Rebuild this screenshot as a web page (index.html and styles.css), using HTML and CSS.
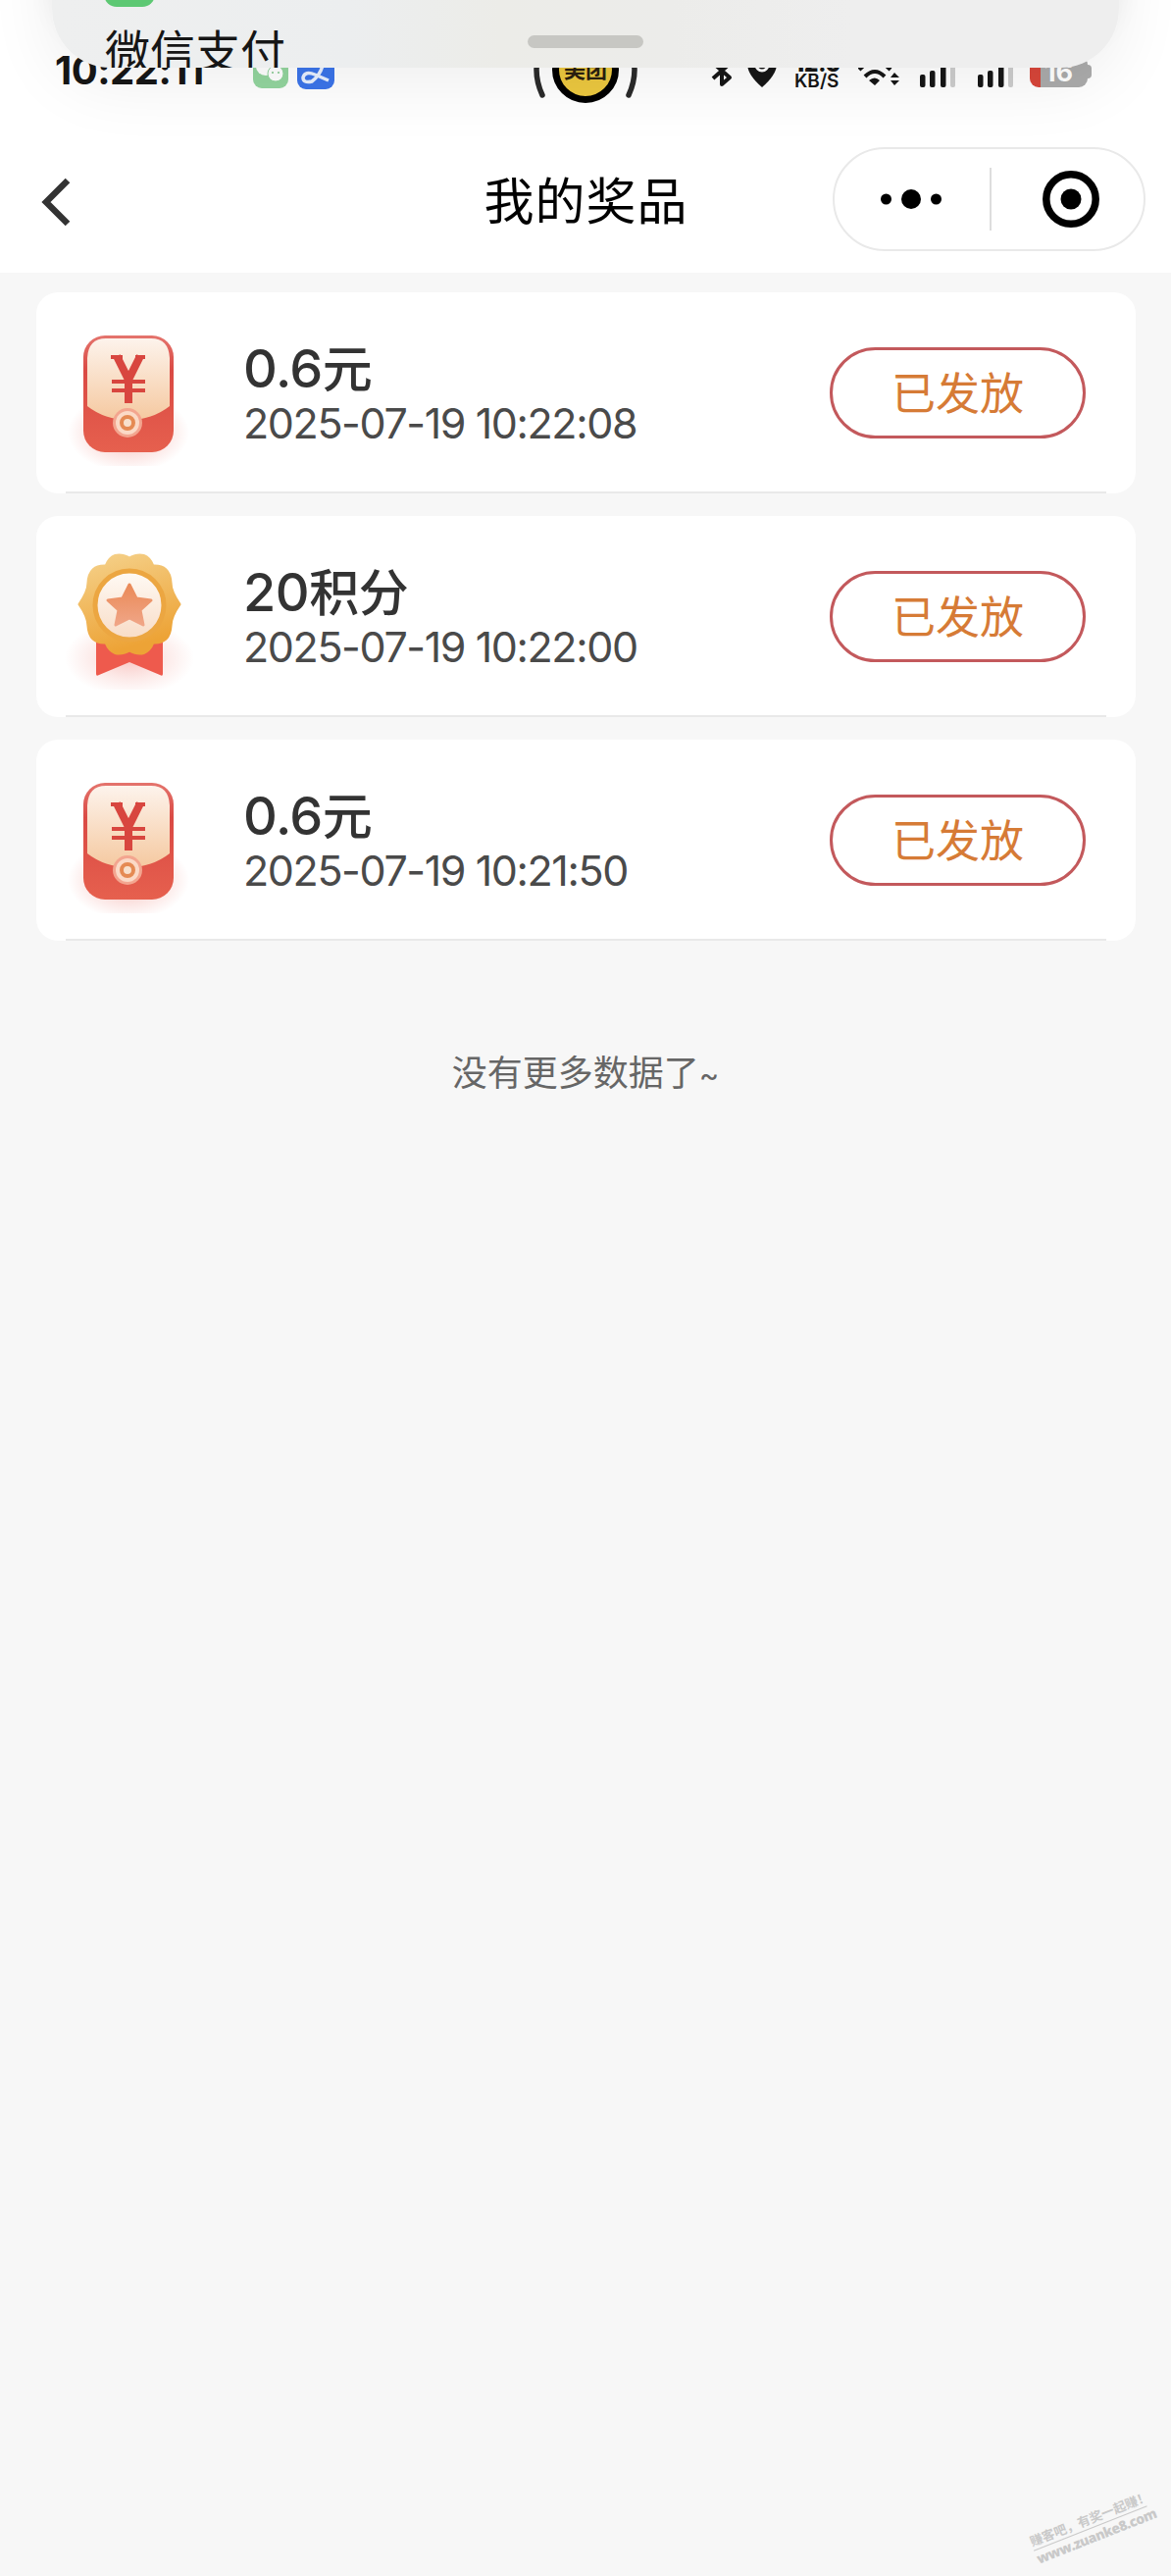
FILE: index.html
```html
<!DOCTYPE html>
<html lang="zh-CN">

<head>
    <meta charset="UTF-8">
    <link rel="stylesheet" href="styles.css">
    <title>我的奖品</title>
</head>

<body>
    <!-- shared icons -->
    <svg class="defs" width="0" height="0">
        <defs>
            <linearGradient id="paper" x1="0" y1="0" x2="0" y2="1">
                <stop offset="0" stop-color="#fdf3ec" />
                <stop offset="1" stop-color="#f5c9a0" />
            </linearGradient>
            <linearGradient id="red" x1="0" y1="0" x2="0" y2="1">
                <stop offset="0" stop-color="#e4746d" />
                <stop offset=".3" stop-color="#da4a44" />
                <stop offset="1" stop-color="#e6604e" />
            </linearGradient>
            <linearGradient id="gold" x1="0" y1="0" x2="0.3" y2="1">
                <stop offset="0" stop-color="#f5d28c" />
                <stop offset="1" stop-color="#eda336" />
            </linearGradient>
            <linearGradient id="star" x1="0" y1="0" x2="0" y2="1">
                <stop offset="0" stop-color="#ea8a58" />
                <stop offset="1" stop-color="#f0a586" />
            </linearGradient>
            <linearGradient id="face" x1="0" y1="0" x2="0" y2="1">
                <stop offset="0" stop-color="#fffaf5" />
                <stop offset="1" stop-color="#f8dcc6" />
            </linearGradient>
            <radialGradient id="glow">
                <stop offset="0" stop-color="#ec5a50" stop-opacity=".5" />
                <stop offset=".6" stop-color="#ee7a70" stop-opacity=".2" />
                <stop offset="1" stop-color="#ee7a70" stop-opacity="0" />
            </radialGradient>
        </defs>
        <symbol id="packet" viewBox="0 0 140 140">
            <ellipse cx="66" cy="106" rx="62" ry="40" fill="url(#glow)" />
            <rect x="20" y="7" width="92" height="119" rx="22" fill="url(#red)" />
            <path d="M24 79V30Q25 10 43 10H89Q107 10 108 30V79Q90 93 66 93Q42 93 24 79Z" fill="url(#paper)" />
            <path d="M54 28 66 52 78 28M66 50V76" fill="none" stroke="#d8463f" stroke-width="8" />
            <path d="M48 29H60M73 29H83M49 54H83M49 63H83" fill="none" stroke="#d8463f" stroke-width="4" />
            <circle cx="65" cy="96" r="15" fill="#f3a58f" />
            <circle cx="65" cy="96" r="12" fill="#fbd9c6" />
            <circle cx="65" cy="96" r="6" fill="#f8e0cc" stroke="#e58a53" stroke-width="4" />
        </symbol>
        <symbol id="medal" viewBox="0 0 140 140">
            <ellipse cx="67" cy="108" rx="66" ry="38" fill="url(#glow)" opacity=".7" />
            <path d="M33 84H101V124Q101 127 98 125L67 112 36 125Q33 127 33 124Z" fill="#ee5a4d" />
            <path fill="url(#gold)" stroke="url(#gold)" stroke-width="3" stroke-linejoin="round"
                d="M67 6Q84 -3 91 14Q108 13 109 31Q109 40 118 53Q109 66 109 75Q108 93 91 92Q84 109 67 100Q50 109 43 92Q26 93 25 75Q25 66 16 53Q25 40 25 31Q26 13 43 14Q50 -3 67 6Z" />
            <circle cx="67" cy="54" r="35" fill="url(#face)" stroke="#eca641" stroke-width="5" />
            <path d="M67 33 74 47 89 49 78 59 81 74 67 67 53 74 56 59 45 49 60 47Z" fill="url(#star)"
                stroke="url(#star)" stroke-width="3" stroke-linejoin="round" />
        </symbol>
        <symbol id="bars" viewBox="0 0 38 30">
            <rect x="0" y="17" width="5.500" height="13" rx="2" fill="#161616" />
            <rect x="10" y="13" width="5.500" height="17" rx="2" fill="#161616" />
            <rect x="21" y="7" width="5.500" height="23" rx="2" fill="#161616" />
            <rect x="31" y="2" width="5" height="28" rx="2" fill="#cdcdcd" />
        </symbol>
    </svg>

    <div class="status">
        <span class="time">10:22:11</span>
        <svg class="wechat" width="36" height="38" viewBox="0 0 36 38">
            <rect width="36" height="38" rx="9" fill="#93d59e" />
            <ellipse cx="13" cy="16" rx="10" ry="9" fill="#fff" />
            <circle cx="23" cy="23" r="8" fill="#fff" stroke="#93d59e" />
            <circle cx="20" cy="22" r="1" fill="#7fc98b" />
            <circle cx="26" cy="22" r="1" fill="#7fc98b" />
        </svg>
        <svg class="alipay" width="38" height="38" viewBox="0 0 38 38">
            <rect width="38" height="38" rx="9" fill="#3b74ea" />
            <path d="M8 11H30M19 6V16M26 14Q23 24 15 30Q6 32 6 26Q8 19 18 23L32 29" fill="none" stroke="#e8f0ff"
                stroke-width="3.500" />
        </svg>
        <div class="island">
            <svg width="106" height="106" viewBox="0 0 106 106">
                <circle cx="53" cy="53" r="30.500" fill="#ecc83f" stroke="#000" stroke-width="7" />
                <path d="M9 79Q-3 53 9 27M97 79Q109 53 97 27" fill="none" stroke="#2b2b2b" stroke-width="5.500"
                    stroke-linecap="round" />
            </svg>
            <span>美团</span>
        </div>
        <div class="signals">
            <svg class="bluetooth" width="22" height="36" viewBox="0 0 22 36">
                <path d="M2 27 19 12 11 4V33L19 26 3 12" fill="none" stroke="#161616" stroke-width="4"
                    stroke-linejoin="round" />
            </svg>
            <svg class="pin" width="30" height="40" viewBox="0 0 30 40">
                <path d="M15 40Q0 27 0 16A15 15 0 0 1 30 16Q30 27 15 40Z" fill="#161616" />
                <circle cx="15" cy="17" r="6" fill="#161616" stroke="#fff" stroke-width="3" />
            </svg>
            <div class="speed"><b>12.6</b><span>KB/S</span></div>
            <svg class="wifi" width="42" height="36" viewBox="0 0 42 36">
                <path d="M1 18Q17 2 33 18M7 25Q17 15 27 25" fill="none" stroke="#161616" stroke-width="4" />
                <path d="M11 29Q17 24 22 29L17 34ZM33 26 37 21 42 26ZM33 29H42L37 34Z" fill="#161616" />
            </svg>
            <svg class="bar1" width="38" height="30"><use href="#bars" /></svg>
            <svg class="bar2" width="38" height="30"><use href="#bars" /></svg>
            <div class="battery">16</div>
        </div>
    </div>

    <div class="notice">
        <i class="app"></i>
        <p>微信支付</p>
        <i class="handle"></i>
    </div>

    <div class="header">
        <svg class="back" width="32" height="50" viewBox="0 0 32 50">
            <path d="M29 3 7 25 29 47" fill="none" stroke="#333" stroke-width="6.500" />
        </svg>
        <h1>我的奖品</h1>
        <div class="capsule">
            <svg width="52" height="20" viewBox="0 0 52 20">
                <circle cx="6.500" cy="10" r="5.500" />
                <circle cx="32" cy="10" r="10" />
                <circle cx="57.500" cy="10" r="5.500" />
            </svg>
            <i></i>
            <svg width="58" height="58" viewBox="0 0 58 58">
                <circle cx="29" cy="29" r="25.200" fill="none" stroke="#000" stroke-width="7.500" />
                <circle cx="29" cy="29" r="10.500" />
            </svg>
        </div>
    </div>

    <div class="list">
        <div class="card">
            <svg class="icon"><use href="#packet" /></svg>
            <div class="info">
                <h2>0.6<span>元</span></h2>
                <p>2025-07-19 10:22:08</p>
            </div>
            <button>已发放</button>
        </div>
        <div class="card">
            <svg class="icon"><use href="#medal" /></svg>
            <div class="info">
                <h2>20<span>积分</span></h2>
                <p>2025-07-19 10:22:00</p>
            </div>
            <button>已发放</button>
        </div>
        <div class="card">
            <svg class="icon"><use href="#packet" /></svg>
            <div class="info">
                <h2>0.6<span>元</span></h2>
                <p>2025-07-19 10:21:50</p>
            </div>
            <button>已发放</button>
        </div>
    </div>

    <p class="more">没有更多数据了<span>~</span></p>

    <div class="watermark">
        <p>赚客吧，有奖一起赚！</p>
        <b>www.zuanke8.com</b>
    </div>
</body>

</html>
```
FILE: styles.css
```css
* {
    margin: 0;
    padding: 0;
    box-sizing: border-box;
}

body {
    position: relative;
    min-height: 2626px;
    background-color: #f7f7f7;
    font-family: Inter, 'Noto Sans CJK SC', sans-serif;
    overflow: hidden;
}

svg {
    display: block;
    flex-shrink: 0;
}

.defs {
    position: absolute;
}

.status {
    height: 130px;
    padding: 0 83px 0 56px;
    background-color: #fff;
    display: flex;
    align-items: flex-start;
}

.time {
    width: 202px;
    margin-top: 48px;
    font-size: 40px;
    line-height: 48px;
    font-weight: 700;
    letter-spacing: -0.500px;
    color: #161616;
}

.wechat {
    margin-top: 52px;
}

.alipay {
    margin: 53px 0 0 9px;
}

.island {
    position: relative;
    width: 106px;
    height: 106px;
    margin: 18px 0 0 203px;
}

.island span {
    position: absolute;
    left: 0;
    top: 37px;
    width: 106px;
    text-align: center;
    font-size: 22px;
    line-height: 32px;
    font-weight: 700;
    color: #2a2010;
}

.signals {
    position: relative;
    display: flex;
    align-items: flex-end;
    height: 89px;
    margin-left: 75px;
}

.pin {
    margin-left: 15px;
}

.speed {
    width: 46px;
    margin: 0 0 -3px 18px;
    display: flex;
    flex-direction: column;
    font-size: 19px;
    line-height: 19px;
    font-weight: 600;
    color: #161616;
}

.speed b {
    font-size: 22px;
    line-height: 15px;
}

.wifi {
    margin-left: 19px;
}

.bar1 {
    margin-left: 21px;
}

.bar2 {
    margin-left: 21px;
}

.battery {
    position: relative;
    width: 59px;
    height: 32px;
    margin-left: 15px;
    border-radius: 9px;
    background: linear-gradient(90deg, #d8463a 11px, #ababab 11px);
    color: #fff;
    font-size: 27px;
    line-height: 33px;
    font-weight: 700;
    text-align: center;
}

.battery::after {
    content: "";
    position: absolute;
    right: -4px;
    top: 9px;
    width: 5px;
    height: 14px;
    border-radius: 0 4px 4px 0;
    background-color: #ababab;
}

/* notification sliding down over the status bar */
.notice {
    position: absolute;
    left: 53px;
    right: 53px;
    top: -180px;
    height: 249px;
    border-radius: 60px;
    background: linear-gradient(90deg, #eeefef, #eceeef 28%, #ecece8 42%, #ececea 58%, #eeeeee 75%);
    box-shadow: 0 16px 70px rgba(0, 0, 0, .07), 0 -24px 30px rgba(0, 0, 0, .06);
    overflow: hidden;
}

.notice .app {
    position: absolute;
    left: 53px;
    bottom: 62px;
    width: 52px;
    height: 52px;
    border-radius: 13px;
    background-color: #5dc873;
}

.notice p {
    position: absolute;
    left: 54px;
    top: 199px;
    font-size: 46px;
    line-height: 66px;
    color: #161616;
}

.notice .handle {
    position: absolute;
    left: 485px;
    bottom: 20px;
    width: 118px;
    height: 13px;
    border-radius: 7px;
    background-color: #c7c7c3;
}

.header {
    height: 148px;
    padding: 0 26px 0 40px;
    background-color: #fff;
    display: grid;
    grid-template-columns: 319px 1fr 319px;
    align-items: center;
}

.back {
    margin-top: 3px;
}

.header h1 {
    font-size: 51px;
    font-weight: 400;
    letter-spacing: 1px;
    text-align: center;
    color: #000;
    margin: -4px 13px 0 0;
}

.capsule {
    width: 319px;
    height: 106px;
    border: 2px solid #e9e9e9;
    border-radius: 53px;
    display: flex;
    align-items: center;
    padding-left: 46px;
    margin-top: -2px;
}

.capsule svg {
    overflow: visible;
}

.capsule i {
    width: 2px;
    height: 64px;
    margin: 0 52px 0 60px;
    background-color: #ddd;
}

.list {
    padding: 20px 36px 0 37px;
    display: flex;
    flex-direction: column;
    gap: 23px;
}

.card {
    position: relative;
    height: 205px;
    padding: 0 51px 0 28px;
    border-radius: 22px;
    background-color: #fff;
    display: flex;
    align-items: center;
}

.card::after {
    content: "";
    position: absolute;
    left: 30px;
    right: 30px;
    bottom: 0;
    height: 2px;
    background-color: #e9e9e9;
}

.icon {
    width: 140px;
    height: 140px;
    margin-top: 9px;
}

.info {
    flex: 1;
    margin: 2px 0 0 43px;
}

.info h2 {
    font-size: 54px;
    line-height: 58px;
    font-weight: 500;
    letter-spacing: -0.500px;
    color: #333;
}

.info h2 span {
    font-size: 51px;
}

.info p {
    font-size: 43px;
    line-height: 50px;
    letter-spacing: -1.400px;
    color: #4a4a4a;
}

.card button {
    width: 261px;
    height: 93px;
    padding-bottom: 4px;
    border: 3px solid #c3595c;
    border-radius: 47px;
    background-color: #fff;
    font-family: inherit;
    font-size: 45px;
    color: #d67b36;
}

.more {
    margin-top: 109px;
    font-size: 36px;
    line-height: 52px;
    text-align: center;
    color: #666;
}

.more span {
    font-size: 31px;
}

.watermark {
    position: absolute;
    left: 1050px;
    top: 2560px;
    width: 124px;
    transform: rotate(-21.500deg);
    color: #c9c9c9;
    font-size: 13px;
    line-height: 17px;
    font-weight: 700;
    white-space: nowrap;
}

.watermark p {
    border-bottom: 1px solid #c9c9c9;
}

.watermark b {
    font-family: 'Open Sans', sans-serif;
    font-size: 14px;
    letter-spacing: -0.500px;
}
```
